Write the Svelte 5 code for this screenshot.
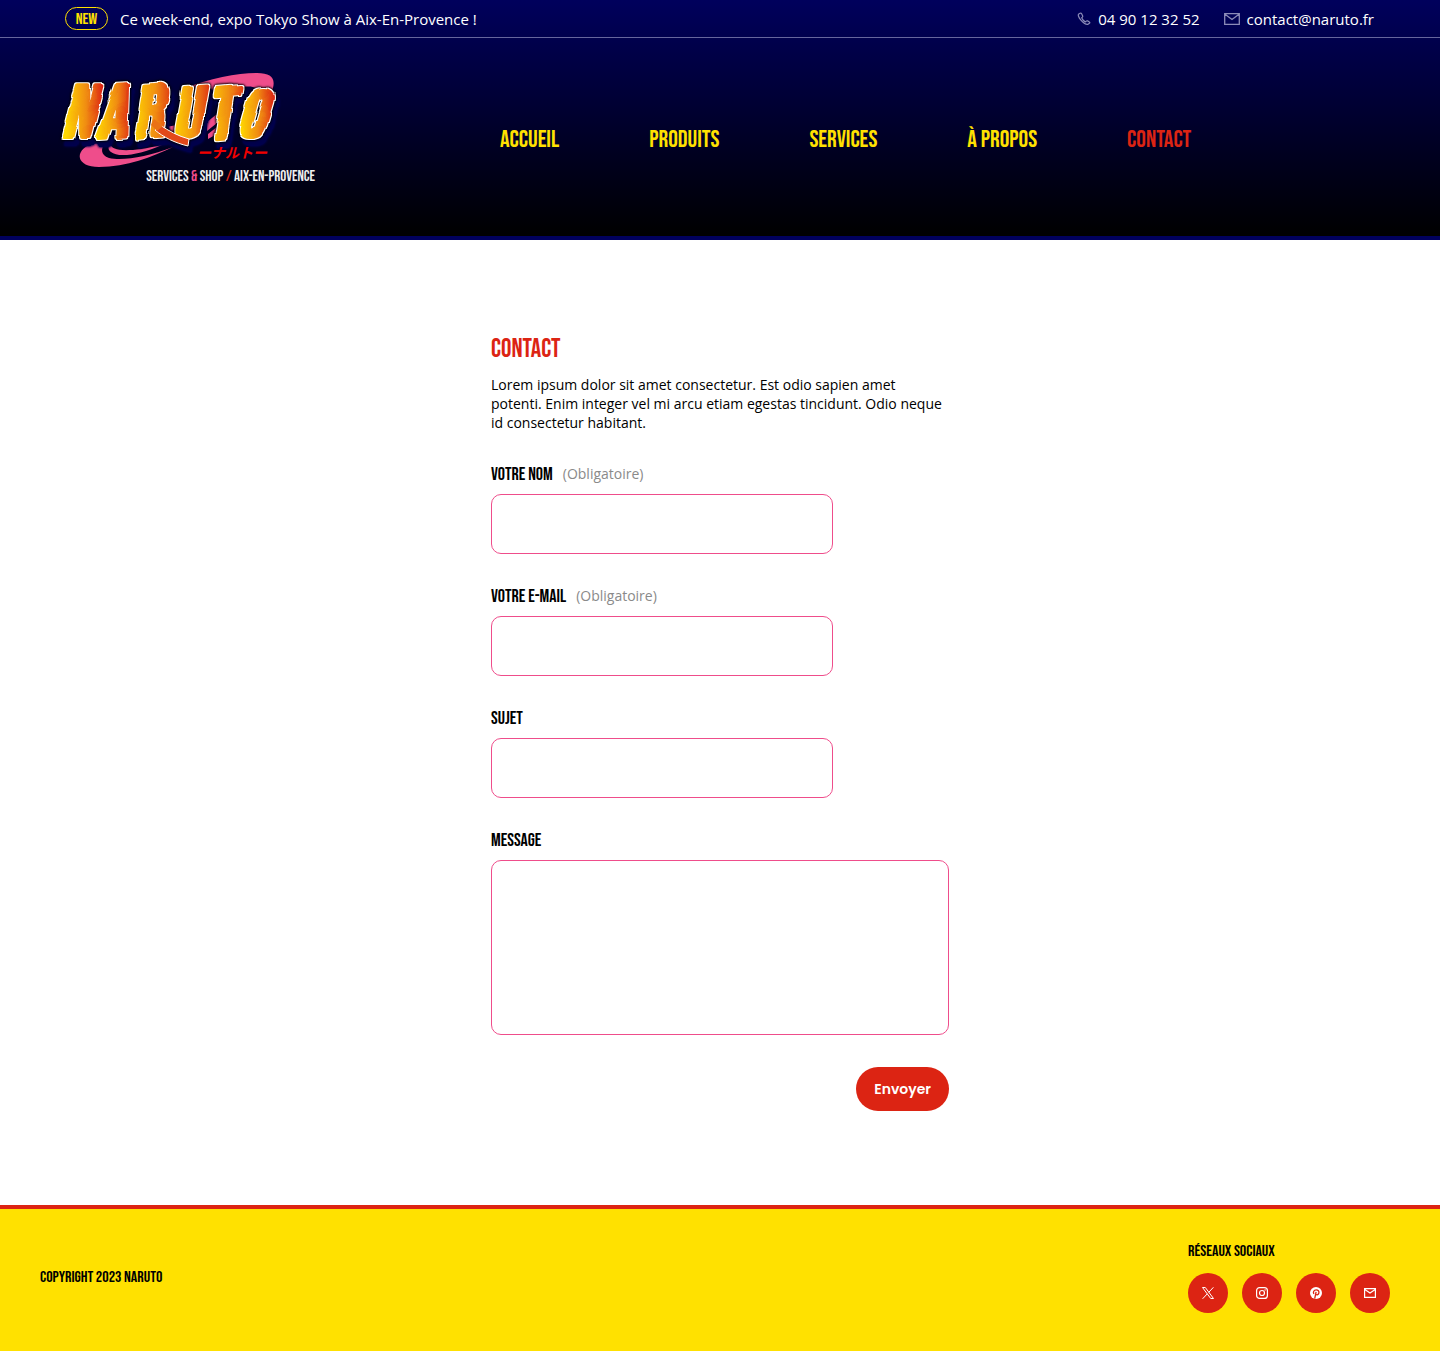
<script>
  const links = [
    { label: 'Accueil', href: '#accueil' },
    { label: 'Produits', href: '#produits' },
    { label: 'Services', href: '#services' },
    { label: 'À propos', href: '#a-propos' },
    { label: 'Contact', href: '#contact', current: true }
  ];

  const fields = [
    { id: 'nom', label: 'Votre nom', type: 'text', required: true },
    { id: 'email', label: 'Votre e-mail', type: 'email', required: true },
    { id: 'sujet', label: 'Sujet', type: 'text', required: false }
  ];

  const letters = [
    { char: 'N', x: 4, y: 70, turn: 0, size: 74 },
    { char: 'A', x: 40, y: 71, turn: -3, size: 73 },
    { char: 'R', x: 77, y: 71, turn: -5, size: 73 },
    { char: 'U', x: 116, y: 71, turn: -4, size: 70 },
    { char: 'T', x: 151, y: 72, turn: -5, size: 70 },
    { char: 'O', x: 180, y: 69, turn: 2, size: 66 }
  ];
</script>

<header>
  <div class="topbar">
    <div class="news">
      <span class="tag">NEW</span>
      <span>Ce week-end, expo Tokyo Show à Aix-En-Provence !</span>
    </div>
    <div class="reach">
      <a href="tel:0490123252">
        <svg width="14" height="14" viewBox="0 0 14 14" fill="none" stroke="#8b8bb8" stroke-width="1.2" aria-hidden="true">
          <path d="M3.2 1.2 1.7 2.1C.8 2.8 1.4 5.2 3.9 8.1c2.7 3 5.6 4.6 7.1 4.2l1.4-1c.6-.5.5-1-.1-1.4L10.6 8.9c-.6-.3-1-.2-1.4.3l-.6.7C7.4 9.6 4.9 7.1 4.7 5.7l.6-.5c.5-.5.6-.9.3-1.5L4.5 1.5c-.3-.5-.8-.6-1.3-.3Z" />
        </svg>
        04 90 12 32 52
      </a>
      <a href="mailto:contact@naruto.fr">
        <svg width="16" height="12" viewBox="0 0 16 12" fill="none" stroke="#8b8bb8" stroke-width="1.3" aria-hidden="true">
          <path d="M.7.7h14.6v10.6H.7zM1 1.2l7 5.3 7-5.3" />
        </svg>
        contact@naruto.fr
      </a>
    </div>
  </div>

  <div class="masthead">
    <a class="brand" href="#accueil" aria-label="Naruto">
      <svg width="226" height="100" viewBox="0 0 226 100">
        <defs>
          <linearGradient id="flame">
            <stop offset="0.1" stop-color="#ffd800" />
            <stop offset="0.6" stop-color="#f08c12" />
            <stop offset="1" stop-color="#dc2413" />
          </linearGradient>
          <filter id="brush" x="-20%" y="-10%" width="150%" height="120%" color-interpolation-filters="sRGB">
            <feTurbulence type="fractalNoise" baseFrequency="0.07" numOctaves="1" seed="4" />
            <feDisplacementMap in="SourceGraphic" scale="6" xChannelSelector="R" yChannelSelector="G" result="ink" />
            <feMorphology in="ink" operator="dilate" radius="1" result="wide" />
            <feFlood flood-color="#fff" />
            <feComposite in2="wide" operator="in" result="rim" />
            <feMerge>
              <feMergeNode in="rim" />
              <feMergeNode in="ink" />
            </feMerge>
          </filter>
        </defs>
        <g fill="#ef4d8b">
          <path d="M126 22C153 11 181 6 200 6c16 0 20 7 14 20l-3 7-10-1c3-10-2-14-16-12-22 2-41 8-59 14Z" />
          <path d="M34 77C17 84 19 100 42 100c28 0 53-10 74-20-26 10-50 14-64 11-9-3-8-10-4-15Z" />
          <path d="M53 77c2 7 17 9 52 1-22 10-44 13-51 7-3-2-3-5-1-8Z" />
          <path d="M104 61l16-3v7h-10zM150 55l10-8v9l-10 8zM140 39l8-2v4l-8 1zM151 67l9-7v7l-9 5z" />
        </g>
        <g class="wordmark">
          {#each letters as l}
            <text x={l.x} y={l.y} rotate={l.turn} font-size={l.size} filter="url(#brush)">{l.char}</text>
          {/each}
          <path d="M103 58c9 6 18 11 29 14l-1 7c-13-3-25-9-33-16Z" fill="#e2491a" stroke="#fff" />
          <path d="M97 52l9 7-6 5-6-6Z" fill="#ea7216" />
        </g>
        <text class="kana" x="140" y="91">ーナルトー</text>
      </svg>
      <span class="tagline">SERVICES <b>&amp;</b> SHOP <i>/</i> AIX-EN-PROVENCE</span>
    </a>
    <nav aria-label="Navigation principale">
      {#each links as link}
        <a href={link.href} class:current={link.current} aria-current={link.current ? 'page' : undefined}>{link.label}</a>
      {/each}
    </nav>
  </div>
</header>

<main>
  <form>
    <h1>Contact</h1>
    <p>Lorem ipsum dolor sit amet consectetur. Est odio sapien amet potenti. Enim integer vel mi arcu etiam egestas tincidunt. Odio neque id consectetur habitant.</p>
    {#each fields as field}
      <div class="field">
        <label for={field.id}>{field.label}{#if field.required}<small>(Obligatoire)</small>{/if}</label>
        <input id={field.id} type={field.type} required={field.required} />
      </div>
    {/each}
    <div class="field">
      <label for="message">Message</label>
      <textarea id="message"></textarea>
    </div>
    <button type="submit">Envoyer</button>
  </form>
</main>

<footer>
  <span class="copyright">Copyright 2023 Naruto</span>
  <div class="social">
    <h2>Réseaux sociaux</h2>
    <div class="icons">
      <a href="#x" aria-label="X">
        <svg width="14" height="14" viewBox="0 0 14 14" fill="none" stroke="#fff">
          <path d="M1.5 1.5h2.8l8.2 11H9.7zM12.4 1.3 7.7 6.4M6.3 7.8 1.6 12.8" />
        </svg>
      </a>
      <a href="#instagram" aria-label="Instagram">
        <svg width="14" height="14" viewBox="0 0 14 14" fill="none" stroke="#fff" stroke-width="1.2">
          <rect x="1.6" y="1.6" width="10.8" height="10.8" rx="3" />
          <circle cx="7" cy="7" r="2.5" />
          <circle cx="10.1" cy="3.9" r="0.7" fill="#fff" stroke="none" />
        </svg>
      </a>
      <a href="#pinterest" aria-label="Pinterest">
        <svg width="14" height="14" viewBox="0 0 14 14" fill="none">
          <circle cx="7" cy="7" r="6" fill="#fff" />
          <path d="M4.9 8C3.7 6 4.9 3.9 7.2 3.9c2 0 3 1.3 2.7 2.9C9.6 8.6 7.9 9.4 6.8 8.3M7.1 5.9 5.7 12.6" stroke="#dc2413" stroke-width="1.3" />
        </svg>
      </a>
      <a href="mailto:contact@naruto.fr" aria-label="E-mail">
        <svg width="14" height="14" viewBox="0 0 14 14" fill="none" stroke="#fff" stroke-width="1.2">
          <path d="M1.6 2.6h10.8v8.8H1.6zM1.8 3.6 7 7l5.2-3.4" />
        </svg>
      </a>
    </div>
  </div>
</footer>

<style>
  :global(body) {
    margin: 0;
    background: #fff;
    color: #000;
    font-family: 'Open Sans', 'Noto Sans', sans-serif;
  }

  :global(#app) {
    display: flex;
    flex-direction: column;
    min-height: 100vh;
  }

  a {
    color: inherit;
    text-decoration: none;
  }

  header {
    border-bottom: 4px solid #00005c;
    background: linear-gradient(#00005c, #000);
    color: #fff;
  }

  .topbar {
    display: flex;
    align-items: center;
    justify-content: space-between;
    height: 37px;
    padding: 0 66px 0 65px;
    border-bottom: 1px solid #66669d;
    font-size: 15px;
    line-height: 20px;
  }

  .news,
  .reach,
  .reach a {
    display: flex;
    align-items: center;
  }

  .news {
    gap: 12px;
  }

  .reach {
    gap: 24px;
  }

  .reach a {
    gap: 7px;
  }

  .tag,
  .tagline,
  nav,
  h1,
  h2,
  label,
  .copyright {
    font-family: 'Bebas Neue', 'Liberation Sans Narrow', 'Liberation Sans', sans-serif;
    font-weight: 400;
    text-transform: uppercase;
  }

  .tag {
    box-sizing: border-box;
    width: 43px;
    padding-top: 2px;
    border: 1px solid #ffe100;
    border-radius: 12px;
    color: #ffe100;
    font-size: 16px;
    line-height: 19px;
    text-align: center;
  }

  .masthead {
    display: flex;
    gap: 185px;
    height: 198px;
    padding-left: 57px;
  }

  .brand {
    display: flex;
    flex-direction: column;
    width: 258px;
    padding-top: 29px;
  }

  .brand svg {
    overflow: visible;
  }

  .wordmark {
    filter: drop-shadow(0 0 1px #000) drop-shadow(0 0 1px #000) drop-shadow(3px 6px 0 #00004c);
  }

  .wordmark text {
    fill: url(#flame);
    stroke: url(#flame);
    stroke-width: 4px;
    stroke-linejoin: round;
    font-family: 'Bebas Neue', 'Liberation Sans Narrow', sans-serif;
    font-style: italic;
  }

  .kana {
    fill: #f00000;
    font-family: 'Noto Sans CJK JP', sans-serif;
    font-size: 14px;
    font-style: italic;
    font-weight: 700;
  }

  .tagline {
    align-self: flex-end;
    color: #eee;
    font-size: 15px;
    line-height: 20px;
    white-space: nowrap;
  }

  .tagline b {
    color: #ef4d8b;
    font-weight: 400;
  }

  .tagline i {
    color: #dc2413;
    font-style: normal;
  }

  nav {
    display: flex;
    gap: 90px;
    padding-top: 87px;
    color: #ffe100;
    font-size: 24px;
    line-height: 30px;
    white-space: nowrap;
  }

  .current {
    color: #dc2413;
  }

  main {
    padding: 92px 24px 94px;
  }

  form {
    display: flex;
    flex-direction: column;
    max-width: 458px;
    margin: 0 auto;
  }

  h1 {
    margin: 0;
    color: #dc2413;
    font-size: 26px;
    line-height: 36px;
  }

  p {
    margin: 7px 0 32px;
    font-size: 14px;
    line-height: 19px;
  }

  .field {
    display: flex;
    flex-direction: column;
    gap: 8px;
    margin-bottom: 32px;
  }

  label {
    display: flex;
    align-items: center;
    gap: 10px;
    font-size: 18px;
    line-height: 22px;
  }

  small {
    padding-bottom: 2px;
    color: #8a8a8a;
    font-family: 'Open Sans', sans-serif;
    font-size: 14px;
    font-weight: 400;
    line-height: 20px;
    text-transform: none;
  }

  input,
  textarea {
    box-sizing: border-box;
    width: 100%;
    height: 60px;
    padding: 16px;
    border: 1px solid #ef4d8b;
    border-radius: 10px;
    background: #fff;
    font: inherit;
  }

  input {
    max-width: 342px;
  }

  textarea {
    height: 175px;
    resize: none;
  }

  button {
    align-self: flex-end;
    padding: 0 18px;
    border: 0;
    border-radius: 22px;
    background: #dc2413;
    color: #fff;
    font-family: Poppins, Inter, sans-serif;
    font-size: 14px;
    font-weight: 600;
    line-height: 44px;
  }

  footer {
    display: flex;
    flex: 1;
    align-items: center;
    justify-content: space-between;
    padding: 0 50px 6px 40px;
    border-top: 4px solid #dc2413;
    background: #ffe100;
  }

  .copyright,
  h2 {
    margin: 0;
    font-size: 16px;
    line-height: 20px;
  }

  .copyright {
    padding-top: 2px;
  }

  h2 {
    padding-top: 1px;
  }

  .social {
    display: flex;
    flex-direction: column;
    gap: 11px;
  }

  .icons {
    display: flex;
    gap: 14px;
  }

  .icons a {
    display: grid;
    place-items: center;
    width: 40px;
    height: 40px;
    border-radius: 50%;
    background: #dc2413;
  }
</style>
